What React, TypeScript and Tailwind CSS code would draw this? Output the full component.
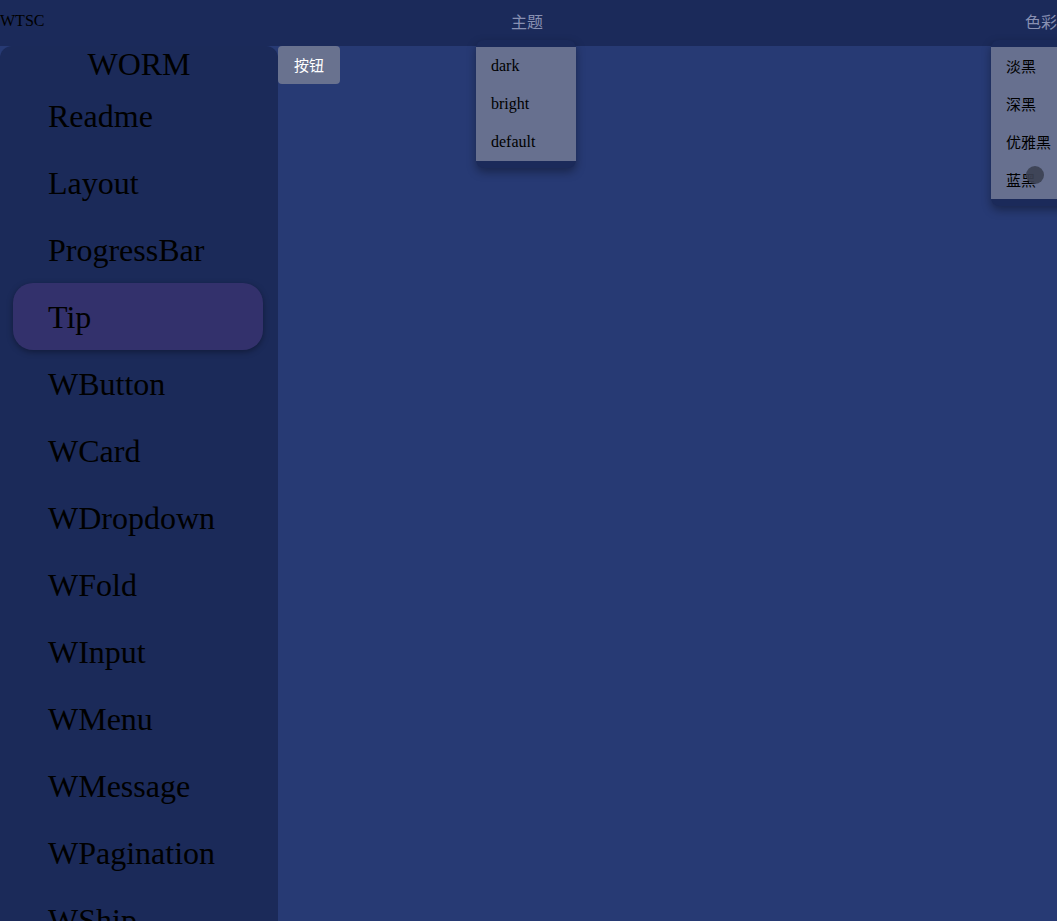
import React from "react";

const serif = { fontFamily: '"Liberation Serif", "Times New Roman", serif' };
const cjk = { fontFamily: '"Noto Sans CJK SC", "Noto Sans", sans-serif' };

const items = ["Readme", "Layout", "ProgressBar", "Tip", "WButton", "WCard", "WDropdown", "WFold", "WInput", "WMenu", "WMessage", "WPagination", "WShip"];
const themes = ["dark", "bright", "default"];
const colors = ["淡黑", "深黑", "优雅黑", "蓝黑"];

export default function App() {
  return (
    <div className="relative w-[1057px] h-[921px] overflow-hidden bg-[#273a74]">
      <header className="flex items-center h-[46px] pb-[5px] bg-[#1b2a5a] whitespace-nowrap">
        <span className="w-[42px] text-[16px] text-black" style={serif}>WTSC</span>
        <span className="ml-[469px] text-[16px] text-[#8890b2]" style={cjk}>主题</span>
        <span className="ml-[482px] text-[16px] text-[#8890b2]" style={cjk}>色彩</span>
      </header>

      <div className="flex h-[875px]">
        <aside className="w-[278px] shrink-0 rounded-t-[12px] bg-[#1b2a59] overflow-hidden" style={serif}>
          <div className="h-[36px] flex items-center justify-center text-[32px] text-black leading-none">WORM</div>
          {items.map(it => (
            <div
              key={it}
              className={
                "ml-[13px] mr-[15px] px-[35px] h-[67px] flex items-center text-[32px] text-black " +
                (it === "Tip" ? "rounded-[20px] bg-[#33316c] shadow-[0_2px_6px_rgba(0,0,0,0.35)]" : "")
              }
            >
              {it}
            </div>
          ))}
        </aside>
        <main className="flex-1">
          <button className="w-[62px] h-[38px] rounded-[4px] bg-[#69728f] text-white text-[15px]" style={cjk}>按钮</button>
        </main>
      </div>

      <div className="absolute left-[476px] top-[40px] w-[100px] py-[7px] rounded-[8px] bg-[#1b2a5a] shadow-[0_4px_10px_rgba(0,0,0,0.35)]">
        <div className="bg-[#67708f]">
          {themes.map(t => (
            <div key={t} className="h-[38px] flex items-center pl-[15px] text-[16px] text-black" style={serif}>{t}</div>
          ))}
        </div>
      </div>

      <div className="absolute left-[991px] top-[40px] w-[90px] py-[7px] rounded-[8px] bg-[#1b2a5a] shadow-[0_4px_10px_rgba(0,0,0,0.35)]">
        <div className="bg-[#67708f]">
          {colors.map(c => (
            <div key={c} className="h-[38px] flex items-center pl-[15px] text-[15px] text-black" style={cjk}>{c}</div>
          ))}
        </div>
      </div>

      <div className="absolute left-[1026px] top-[166px] w-[18px] h-[18px] rounded-full bg-[#3b4052]/90" />
    </div>
  );
}
